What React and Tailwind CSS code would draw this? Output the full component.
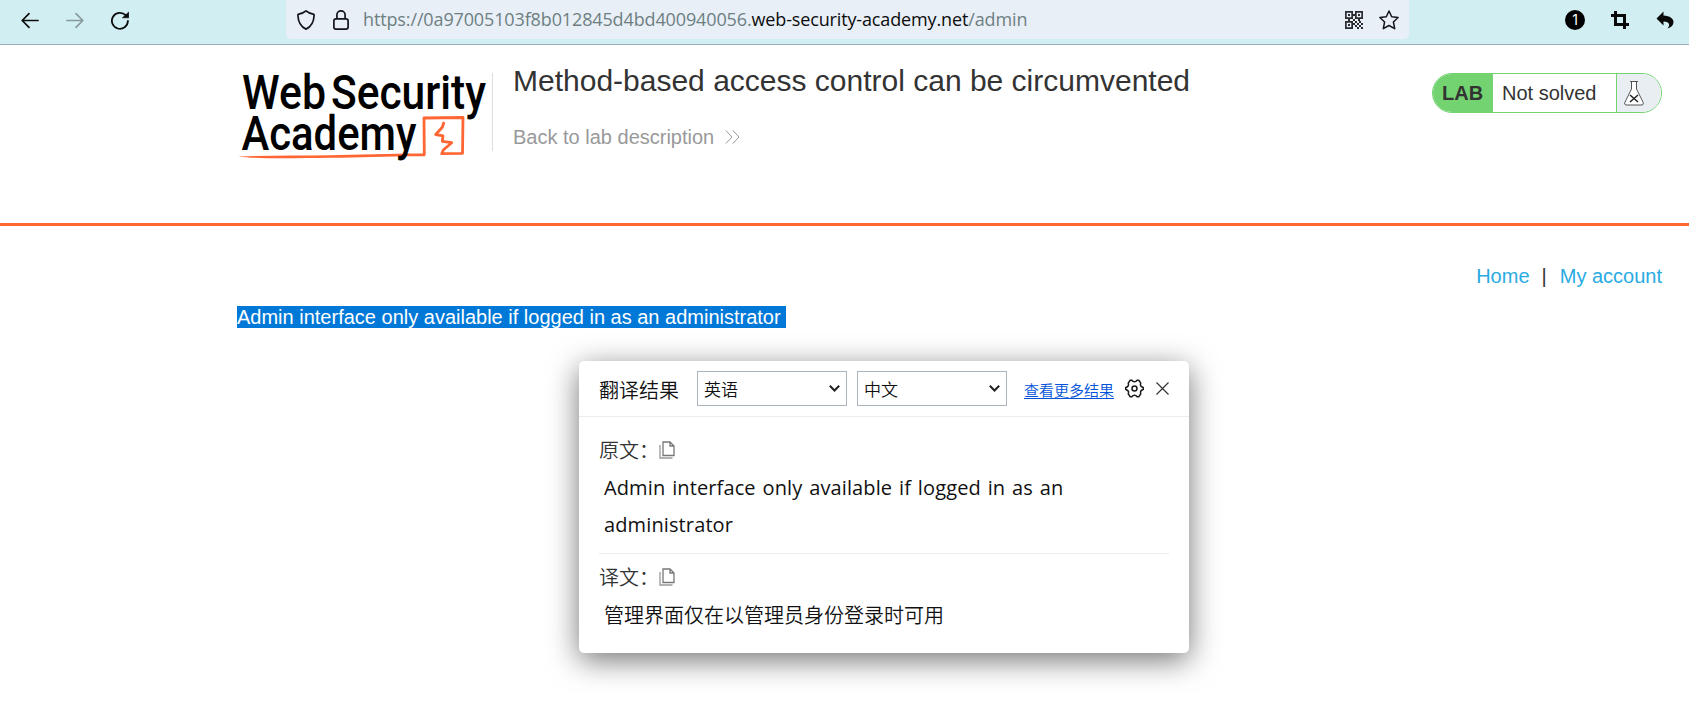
import React from "react";

const uiFont = "font-['Open_Sans','Noto_Sans_CJK_SC',sans-serif]";

function BrowserBar() {
  return (
    <div className="flex h-[45px] border-b border-[#9bb0b2] bg-[#d1eef2]">
      <div className="flex h-[39px] w-[286px] items-center pl-[21px]">
        <svg className="h-5 w-[18px]" viewBox="0 0 18 20" fill="none" stroke="#0c0c0d" strokeWidth="1.7" strokeLinecap="round" strokeLinejoin="round">
          <path d="M17 10.5H1.2M8 3.6L1.2 10.5L8 17.4" />
        </svg>
        <svg className="ml-[27px] h-5 w-[18px]" viewBox="0 0 18 20" fill="none" stroke="#88999b" strokeWidth="1.7" strokeLinecap="round" strokeLinejoin="round">
          <path d="M1 10.5H16.8M10 3.6L16.8 10.5L10 17.4" />
        </svg>
        <svg className="ml-[27px] h-5 w-[18px]" viewBox="0 0 18 20">
          <path d="M14.6 5.2A8 8 0 1 0 16.9 11" fill="none" stroke="#0c0c0d" strokeWidth="1.8" strokeLinecap="round" />
          <path d="M17.8 2V7.8H11.4Z" fill="#0c0c0d" stroke="#0c0c0d" strokeWidth="0.6" strokeLinejoin="round" />
        </svg>
      </div>
      <div className="flex h-[39px] w-[1123px] items-center rounded-b-[5px] bg-[#e8eff7] pl-[11px]">
        <svg className="h-5 w-[18px]" viewBox="0 0 18 20" fill="none" stroke="#15141a" strokeWidth="1.7" strokeLinejoin="round">
          <path d="M9 .9C10.800 2.500 14 3.700 16.200 4.100Q17.200 4.300 17.100 5.300C16.900 11 15 16.500 9 19.100C3 16.500 1.100 11 .9 5.300Q.8 4.300 1.800 4.100C4 3.700 7.200 2.500 9 .9Z" />
        </svg>
        <svg className="ml-[18px] h-5 w-4" viewBox="0 0 16 20" fill="none" stroke="#15141a" strokeWidth="1.7">
          <rect x=".9" y="8.900" width="14.200" height="10.200" rx="2.200" />
          <path d="M3.900 8.900V5A4.100 4.100 0 0 1 12.100 5V8.900" />
        </svg>
        <div className={`ml-[14px] w-[982px] whitespace-nowrap pb-[2px] text-[18px] leading-[26px] text-[#6e7f82] ${uiFont}`}>
          <span className="tracking-[-0.13px]">https://0a97005103f8b012845d4bd400940056.</span>
          <span className="tracking-[-0.14px] text-[#0c0c0d]">web-security-academy.net</span>
          <span className="tracking-[-0.1px]">/admin</span>
        </div>
        <svg className="h-[18px] w-[18px]" viewBox="0 0 18 18" fill="#2a2c31">
          <path fillRule="evenodd" d="M0 0H8V8H0ZM1.700 1.700V6.300H6.300V1.700ZM10 0H18V8H10ZM11.700 1.700V6.300H16.300V1.700ZM0 10H8V18H0ZM1.700 11.700V16.300H6.300V11.700Z" />
          <path d="M3 3H5V5H3ZM13 3H15V5H13ZM3 13H5V15H3ZM8 3H10V5H8ZM8 8H10V10H8ZM3 8H5V10H3ZM13 8H15V10H13ZM10 10H12V12H10ZM14 10H16V12H14ZM12 12H14V14H12ZM16 12H18V14H16ZM10 14H12V16H10ZM14 14H16V16H14ZM12 16H14V18H12ZM16 16H18V18H16ZM8 12H10V14H8Z" />
        </svg>
        <svg className="ml-4 h-5 w-5" viewBox="0 0 20 20" fill="none" stroke="#15141a" strokeWidth="1.500" strokeLinejoin="round">
          <path d="M10 1L12.700 6.800L19.100 7.500L14.400 12L15.700 18.700L10 15.500L4.300 18.700L5.600 12L.9 7.500L7.300 6.800Z" />
        </svg>
      </div>
      <div className="flex h-[39px] flex-1 items-center pl-[156px]">
        <div className="flex h-5 w-5 items-center justify-center rounded-full bg-black font-['Inter',sans-serif] text-[14px] font-normal text-white">1</div>
        <svg className="ml-[26px] h-[18px] w-[18px]" viewBox="0 0 18 18" fill="#0a0a0a">
          <path d="M3 0H6V3H15V12H18V15H15V18H12V15H3V6H0V3H3ZM6 6V12H12V6Z" fillRule="evenodd" />
        </svg>
        <svg className="ml-[27px] h-[18px] w-[18px]" viewBox="0 0 18 18" fill="#0a0a0a">
          <path d="M7.500.5V4.500C14 4.800 17.800 7.600 17.500 11.500C17.300 14.500 15 16.600 11.500 17.500C14.200 14.500 14.200 10.800 7.500 10.500V14.500L.5 7.500Z" />
        </svg>
      </div>
    </div>
  );
}

function Logo() {
  return (
    <svg className="h-[112px] w-[252px] overflow-visible" viewBox="237 60 252 112" fontFamily="Roboto, sans-serif" fontSize="48" fontWeight="500" fill="#000">
      <path d="M424.300 155.300L424 118L463 117.500L462.500 153.300L441.700 153.700L443.300 150L451.700 142.700L442.300 141.300L443 135.800L435.700 134.500L442.300 127.300L444 122" fill="none" stroke="#ff6633" strokeWidth="2.800" strokeLinejoin="round" />
      <path d="M238 156.500C270 155.200 300 155.800 330 155.300S395 153.300 425 153.500V156.200C390 156 360 157.500 330 157.800S260 159.300 238 156.500Z" fill="#ff6633" />
      <text x="242" y="109" textLength="84" lengthAdjust="spacingAndGlyphs">Web</text>
      <text x="331" y="109" textLength="155" lengthAdjust="spacingAndGlyphs">Security</text>
      <text x="241.500" y="150" textLength="175" lengthAdjust="spacingAndGlyphs">Academy</text>
    </svg>
  );
}

function LabHeader() {
  return (
    <header className="flex h-[181px] border-b-[3px] border-[#ff6633] pl-[237px] pr-[27px] pt-[15px]">
      <Logo />
      <div className="ml-[3px] mt-[13px] h-[78px] w-px bg-[#dedede]" />
      <div className="ml-5 flex-1 pt-1 text-[#333]">
        <h2 className="whitespace-nowrap text-[30px] leading-[34px]">Method-based access control can be circumvented</h2>
        <div className="mt-[27px] flex items-center text-[20px] leading-6 text-[#999]">
          <span>Back to lab description</span>
          <svg className="ml-[11px] h-[14px] w-[15px]" viewBox="0 0 15 14" fill="none" stroke="#999" strokeWidth="1">
            <path d="M.8.500L7 7L.8 13.500M7.800.500L14 7L7.800 13.500" />
          </svg>
        </div>
      </div>
      <div className="mt-[13px] flex h-10 w-[230px] overflow-hidden rounded-[20px] border border-[#72d370] text-[20px] leading-[38px] text-[#333]">
        <div className="w-[60px] bg-[#72d370] pl-[9px] font-bold">LAB</div>
        <div className="w-[123px] pl-[9px]">Not solved</div>
        <div className="flex flex-1 items-center border-l border-[#72d370] bg-[#e9eef2] pl-[7px]">
          <svg className="h-[26px] w-5" viewBox="0 0 20 26" fill="#fff" stroke="#555" strokeWidth="1">
            <path d="M6 1.500H14M7.500 1.500V9L.8 22.500Q.2 24.800 2 25H18Q19.800 24.800 19.200 22.500L12.500 9V1.500" />
            <path d="M6 15L14 22M14 15L6 22" strokeWidth="1.500" stroke="#222" />
          </svg>
        </div>
      </div>
    </header>
  );
}

function CopyIcon() {
  return (
    <svg className="h-[18px] w-4" viewBox="0 0 16 18" fill="none" stroke="#777" strokeWidth="1.300">
      <path d="M4 1H11L15 5V14.500H4ZM11 1V5H15" />
      <path d="M1 4V17H13.500" stroke="#999" />
    </svg>
  );
}

function Select({ label }) {
  return (
    <div className="mr-[10px] flex h-[35px] w-[150px] items-center justify-between border border-[#aab4c0] pl-[6px] pr-[6px] text-[17px] leading-6 text-[#111]">
      <span className="pt-px font-['Noto_Sans_CJK_SC',sans-serif] font-[350]">{label}</span>
      <svg className="h-[7px] w-[11px]" viewBox="0 0 11 7" fill="none" stroke="#222" strokeWidth="2">
        <path d="M.8.800L5.500 5.500L10.200.800" />
      </svg>
    </div>
  );
}

function TranslatePopup() {
  return (
    <div className={`absolute left-[579px] top-[361px] h-[292px] w-[610px] rounded-[5px] bg-white text-[20px] text-[#111] shadow-[0_7px_30px_rgba(0,0,0,0.55)] ${uiFont}`}>
      <div className="flex h-14 items-center border-b border-[#ececec] pl-5">
        <span className="w-[98px] pt-[2px] font-['Noto_Sans_CJK_SC',sans-serif] font-[350] leading-7">翻译结果</span>
        <Select label="英语" />
        <Select label="中文" />
        <span className="ml-[7px] mt-[2px] font-['Noto_Sans_CJK_SC',sans-serif] text-[15px] font-[350] leading-5 text-[#0052d9] underline underline-offset-2">查看更多结果</span>
        <svg className="ml-[11px] h-[19px] w-[19px]" viewBox="0 0 20 20" fill="none" stroke="#1a1a1a" strokeWidth="1.600" strokeLinejoin="round">
          <path d="M5.500 1.300H7.200Q8.200 3 10 3T12.800 1.300H14.500L16.600 4.300Q15.700 6.500 16.800 7.500T19.200 8.900V11.100Q17.700 11.500 16.800 12.500T16.600 15.700L14.500 18.700H12.800Q11.800 17 10 17T7.200 18.700H5.500L3.400 15.700Q4.300 13.500 3.200 12.500T.8 11.100V8.900Q2.300 8.500 3.200 7.500T3.400 4.300Z" />
          <circle cx="10" cy="10" r="2.600" />
        </svg>
        <svg className="ml-3 h-[13px] w-[13px]" viewBox="0 0 13 13" fill="none" stroke="#333" strokeWidth="1.200">
          <path d="M.5.500L12.500 12.500M12.500.500L.5 12.500" />
        </svg>
      </div>
      <div className="px-5 pt-[15px]">
        <div className="flex h-9 items-center text-[#333]"><span className="w-[60px] font-['Noto_Sans_CJK_SC',sans-serif] font-[350]">原文：</span><CopyIcon /></div>
        <p className="h-[85px] whitespace-nowrap pl-[5px] pt-px leading-[37px] tracking-[0.12px] [word-spacing:1.500px]">Admin interface only available if logged in as an<br />administrator</p>
        <div className="h-px bg-[#ececec]" />
        <div className="mt-[5px] flex h-9 items-center text-[#333]"><span className="w-[60px] font-['Noto_Sans_CJK_SC',sans-serif] font-[350]">译文：</span><CopyIcon /></div>
        <p className="pl-[5px] pt-px font-['Noto_Sans_CJK_SC',sans-serif] font-[350] leading-[37px]">管理界面仅在以管理员身份登录时可用</p>
      </div>
    </div>
  );
}

export default function App() {
  return (
    <div className="relative h-[728px] w-[1689px] overflow-hidden bg-white font-['Liberation_Sans',Arial,sans-serif]">
      <BrowserBar />
      <LabHeader />
      <main className="pl-[237px] pr-[27px] pt-[38px] text-[20px]">
        <nav className="flex justify-end leading-6 text-[#29abe2]">
          <a>Home</a>
          <span className="ml-3 mr-[13px] text-[#333]">|</span>
          <a>My account</a>
        </nav>
        <div className="mt-[18px] flex">
          <span className="h-[22px] w-[549px] whitespace-nowrap bg-[#0078d7] leading-[22px] text-white">Admin interface only available if logged in as an administrator</span>
        </div>
      </main>
      <TranslatePopup />
    </div>
  );
}
